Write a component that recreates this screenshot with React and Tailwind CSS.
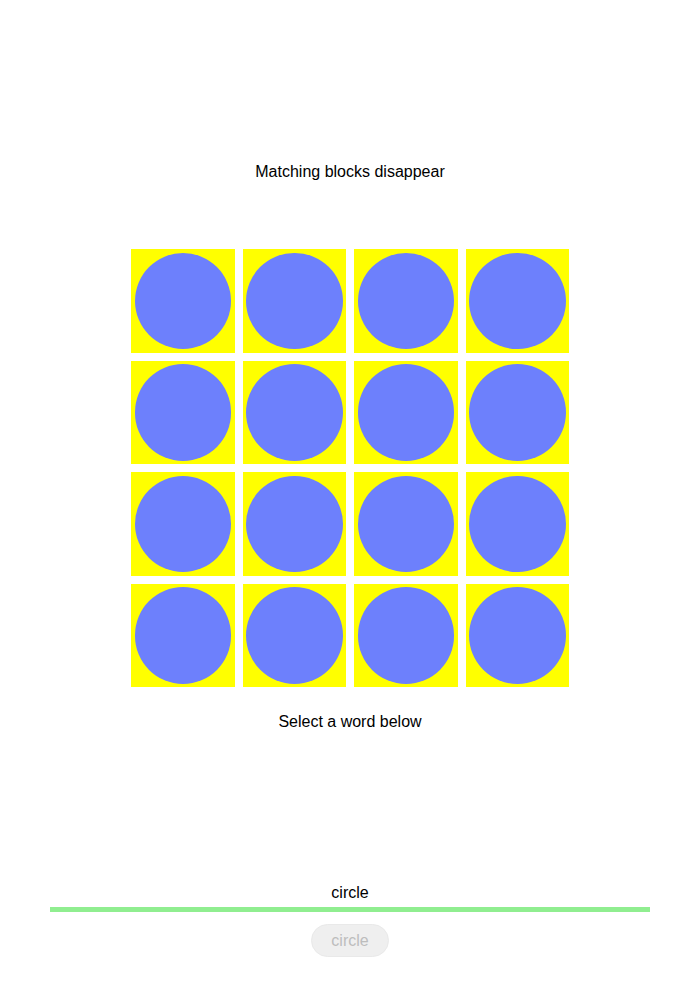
import React from 'react'

const font = { fontFamily: '"Liberation Sans", Arial, sans-serif' }

// ─── Block ────────────────────────────────────────────────────────────────────
function Block() {
  return (
    <div className="w-[103.5px] h-[103.5px] bg-[#ffff00] flex items-center justify-center">
      <div className="w-[96.5px] h-[96.5px] rounded-full bg-[#6d80fc]" />
    </div>
  )
}

// ─── App ──────────────────────────────────────────────────────────────────────
export default function App() {
  const blocks = Array.from({ length: 16 }, (_, i) => i)

  return (
    <div className="w-[700px] h-[1008px] bg-white flex flex-col items-center text-black" style={font}>
      <p className="pt-[163px] text-[16px] leading-[18px]">Matching blocks disappear</p>

      <div className="mt-[68px] grid grid-cols-4 gap-x-[8px] gap-y-[8px]">
        {blocks.map(i => (
          <Block key={i} />
        ))}
      </div>

      <p className="mt-[26px] text-[16px] leading-[18px]">Select a word below</p>

      <p className="mt-[153px] text-[16px] leading-[18px]">circle</p>
      <div className="mt-[5px] w-[600px] h-[5px] bg-[#90ee90]" />

      <button
        type="button"
        className="mt-[12px] px-[19px] py-[6.5px] rounded-full bg-[#efefef] border border-[#e9e9e9] text-[16px] leading-[18px] text-[#bdbdbd]"
        style={font}
      >
        circle
      </button>
    </div>
  )
}
